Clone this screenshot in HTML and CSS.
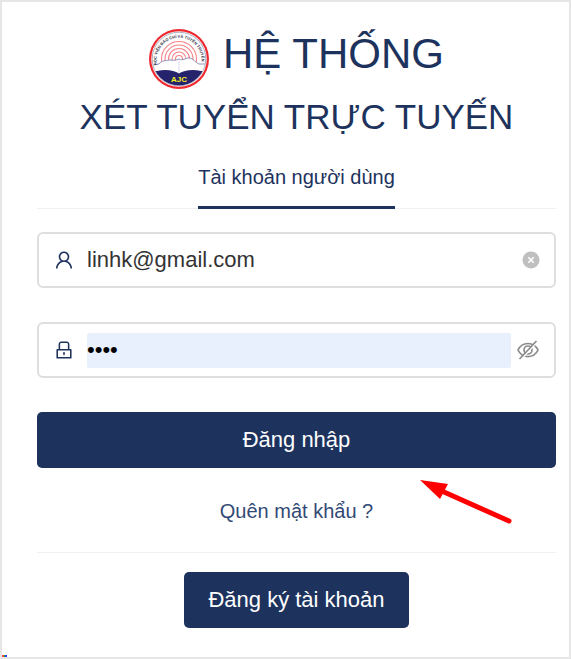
FILE: index.html
```html
<!DOCTYPE html>
<html lang="vi">
<head>
  <meta charset="UTF-8" />
  <meta name="viewport" content="width=device-width, initial-scale=1.0"/>
  <title>Hệ thống xét tuyển trực tuyến</title>
  <link rel="stylesheet" href="styles.css">
</head>
<body>
  <main class="login">
    <header class="heading">
      <h1>
        <svg class="logo" viewBox="0 0 60 60" role="img" aria-label="AJC">
          <defs>
            <clipPath id="inner"><circle cx="30" cy="30" r="26.5"/></clipPath>
            <path id="ring" d="M8 36 A22.500 22.500 0 1 1 52 36"/>
          </defs>
          <circle cx="30" cy="30" r="30" fill="#ee2930"/>
          <circle cx="30" cy="30" r="27.8" fill="#fff"/>
          <g clip-path="url(#inner)">
            <g fill="none" stroke="#f58388" stroke-width="1.100">
              <circle cx="30" cy="30" r="3.500"/>
              <circle cx="30" cy="30" r="7"/>
              <circle cx="30" cy="30" r="10.500"/>
              <circle cx="30" cy="30" r="14"/>
              <circle cx="30" cy="30" r="17.500"/>
            </g>
            <path d="M2 36 L10 35 C13 31 17 32 20 31 C24 31 26 32 30 30 C34 32 36 29 40 29 C44 29 47 34 50 35 L58 35 V60 H2 Z" fill="#fff" stroke="#7878ac" stroke-width=".8"/>
            <path d="M2 42 L8 42 C16 40 25 41 30 44.500 C35 41 44 40 52 42 L58 42 V60 H2 Z" fill="#26236d"/>
            <path d="M30 32 V44" stroke="#c9c9df" stroke-width=".7"/>
          </g>
          <circle cx="30" cy="30" r="26.8" fill="none" stroke="#77779c" stroke-width=".6"/>
          <text class="logo-ring"><textPath href="#ring">HỌC VIỆN BÁO CHÍ VÀ TUYÊN TRUYỀN</textPath></text>
          <text class="logo-name" x="30" y="53" text-anchor="middle">AJC</text>
        </svg>
        <span>HỆ THỐNG</span>
      </h1>
      <h2>XÉT TUYỂN TRỰC TUYẾN</h2>
    </header>

    <nav class="tabs">
      <a class="tab active" href="#account">Tài khoản người dùng</a>
    </nav>

    <form id="account">
      <div class="field">
        <label for="email" aria-label="Email">
          <svg class="icon" viewBox="0 0 1024 1024" fill="currentColor">
            <path d="M858.500 763.600a374 374 0 0 0-80.600-119.500 375.630 375.630 0 0 0-119.500-80.600c-.4-.2-.8-.3-1.200-.5C719.500 518 760 444.700 760 362c0-137-111-248-248-248S264 225 264 362c0 82.700 40.500 156 102.800 201.100-.4.2-.8.3-1.200.5-44.800 18.900-85 46-119.500 80.600a375.630 375.630 0 0 0-80.600 119.500A371.700 371.700 0 0 0 136 901.800a8 8 0 0 0 8 8.200h60c4.400 0 7.900-3.500 8-7.800 2-77.200 33-149.500 87.800-204.300 56.700-56.700 132-87.900 212.200-87.900s155.500 31.200 212.200 87.900C779 752.700 810 825 812 902.200c.1 4.400 3.600 7.800 8 7.800h60a8 8 0 0 0 8-8.200c-1-47.800-10.900-94.300-29.500-138.200zM512 534c-45.900 0-89.100-17.900-121.600-50.400S340 407.900 340 362c0-45.900 17.900-89.100 50.400-121.600S466.100 190 512 190s89.100 17.900 121.600 50.400S684 316.100 684 362c0 45.900-17.900 89.100-50.400 121.600S557.900 534 512 534z"/>
          </svg>
        </label>
        <input type="text" id="email" value="linhk@gmail.com" />
        <button type="button" class="clear" aria-label="Xóa">
          <svg viewBox="0 0 18 18">
            <circle cx="9" cy="9" r="8.500" fill="#bfbfbf"/>
            <path d="M6.300 6.300 L11.700 11.700 M11.700 6.300 L6.300 11.700" stroke="#fff" stroke-width="1.600"/>
          </svg>
        </button>
      </div>

      <div class="field">
        <label for="password" aria-label="Mật khẩu">
          <svg class="icon" viewBox="0 0 1024 1024" fill="currentColor">
            <path d="M832 464h-68V240c0-70.700-57.300-128-128-128H388c-70.700 0-128 57.300-128 128v224h-68c-17.700 0-32 14.300-32 32v384c0 17.700 14.300 32 32 32h640c17.700 0 32-14.300 32-32V496c0-17.700-14.300-32-32-32zM332 240c0-30.900 25.100-56 56-56h248c30.900 0 56 25.100 56 56v224H332V240zm460 600H232V536h560v304zM484 701v53c0 4.400 3.600 8 8 8h40c4.400 0 8-3.600 8-8v-53a48.010 48.010 0 1 0-56 0z"/>
          </svg>
        </label>
        <input type="password" id="password" class="autofill" value="1234" />
        <button type="button" class="toggle" aria-label="Hiện mật khẩu">
          <svg viewBox="0 0 24 24" fill="none" stroke="#8c8c8c" stroke-width="1.700">
            <path d="M2 12 C6 3.300 18 3.300 22 12 C18 20.700 6 20.700 2 12 Z"/>
            <circle cx="12" cy="12" r="4"/>
            <path d="M5 21.500 L21.500 3.500" stroke="#fff" stroke-width="1.500"/>
            <path d="M3.500 21 L20.500 3"/>
          </svg>
        </button>
      </div>

      <div class="submit">
        <button type="submit" class="btn btn-block">Đăng nhập</button>
        <svg class="arrow" viewBox="0 0 94 46" aria-hidden="true">
          <path d="M24 12 L89 41" stroke="#fe0000" stroke-width="5" stroke-linecap="round"/>
          <path d="M0 0 L28 4 L20 19 Z" fill="#fe0000"/>
        </svg>
      </div>
    </form>

    <a class="forgot" href="#forgot">Quên mật khẩu ?</a>

    <div class="register">
      <button type="button" class="btn">Đăng ký tài khoản</button>
    </div>
    <i class="speck"></i>
  </main>
</body>
</html>
```
FILE: styles.css
```css
* { box-sizing: border-box; }
body {
  margin: 0;
  background: #fff;
  color: #1d335d;
  font-family: "Liberation Sans", Arial, sans-serif;
}
.login {
  position: relative;
  min-height: 100vh;
  padding: 27px 13px 28px 35px;
  border: 2px solid #e6e6e6;
}
.heading { text-align: center; }
h1, h2 {
  margin: 0;
  font-weight: normal;
}
h1 {
  display: flex;
  justify-content: center;
  gap: 14px;
  font-size: 42px;
  line-height: 50px;
}
h2 {
  font-size: 35px;
  line-height: 56px;
}
.logo {
  width: 60px;
  height: 60px;
}
.logo-ring {
  font-size: 4px;
  font-weight: bold;
  fill: #34344a;
}
.logo-name {
  font-size: 8px;
  font-weight: bold;
  fill: #f4ee1c;
}
.tabs {
  display: flex;
  justify-content: center;
  margin-bottom: 23px;
  border-bottom: 1px solid #f0f0f0;
}
.tab {
  margin-bottom: -1px;
  padding: 20px 0 17px;
  border-bottom: 3px solid #1d335d;
  color: #1d335d;
  font-size: 20px;
  line-height: 24px;
  text-decoration: none;
}
.field {
  display: flex;
  align-items: center;
  height: 56px;
  margin-bottom: 34px;
  padding: 0 14px;
  border: 2px solid #dedede;
  border-radius: 6px;
}
.field label, .field button { display: flex; }
.icon {
  width: 22px;
  height: 22px;
  margin-right: 12px;
}
.field input {
  flex: 1;
  min-width: 0;
  height: 35px;
  padding: 0;
  border: 0;
  border-radius: 2px;
  outline: none;
  background: #fff;
  color: #333;
  font-family: inherit;
  font-size: 22px;
}
.field .autofill {
  background: #e8f0fe;
  color: #000;
}
.field button {
  padding: 0;
  border: 0;
  background: none;
  cursor: pointer;
}
.clear svg {
  width: 18px;
  height: 18px;
}
.toggle svg {
  width: 24px;
  height: 24px;
  margin-left: 5px;
}
.submit { position: relative; }
.btn {
  height: 56px;
  padding: 0 24px;
  border: 0;
  border-radius: 5px;
  background: #1d335d;
  color: #fff;
  font-family: inherit;
  font-size: 22px;
  cursor: pointer;
}
.btn-block {
  display: block;
  width: 100%;
}
.arrow {
  position: absolute;
  top: 68px;
  right: 42px;
  width: 94px;
  height: 46px;
}
.forgot {
  display: block;
  padding: 31px 0 29px;
  border-bottom: 1px solid #f0f0f0;
  color: #324a75;
  font-size: 20px;
  line-height: 24px;
  text-align: center;
  text-decoration: none;
}
.register {
  padding-top: 19px;
  text-align: center;
}
/* small colour mark in the corner of the frame */
.speck {
  position: absolute;
  left: 0;
  bottom: 0;
  width: 5px;
  height: 2px;
  background: linear-gradient(to right, #f44 40%, #2a4 40% 60%, #24d 60%);
}
```
